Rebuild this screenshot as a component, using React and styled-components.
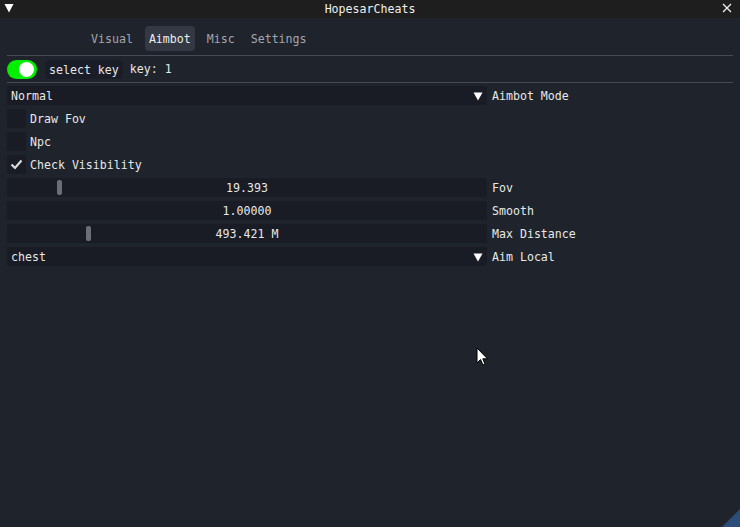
import React from "react";
import styled, { createGlobalStyle } from "styled-components";

const Global = createGlobalStyle`
  html, body { margin: 0; padding: 0; background: #1f232b; }
  * { box-sizing: border-box; }
`;

const Window = styled.div`
  position: relative;
  width: 740px;
  height: 527px;
  background: #1f232b;
  font-family: "DejaVu Sans Mono", "Liberation Mono", monospace;
  font-size: 11.6px;
  color: #e8e8e8;
  overflow: hidden;
  display: flex;
  flex-direction: column;
`;

const TitleBar = styled.div`
  height: 18px;
  background: #1e1e1e;
  display: grid;
  grid-template-columns: 20px 1fr 20px;
  align-items: center;
  color: #f0f0f0;
`;

const Title = styled.div`
  text-align: center;
  line-height: 18px;
`;

const Content = styled.div`
  padding: 8px 7px 0 7px;
  display: flex;
  flex-direction: column;
`;

const Tabs = styled.div`
  display: flex;
  gap: 8px;
  padding-left: 80px;
  height: 25px;
`;

const Tab = styled.div`
  padding: 0 4px;
  height: 25px;
  line-height: 26px;
  border-radius: 4px;
  color: ${(p) => (p.$active ? "#eeeeee" : "#a4a6ad")};
  background: ${(p) => (p.$active ? "#343843" : "transparent")};
`;

const Separator = styled.div`
  height: 1px;
  background: #464a55;
  margin: ${(p) => p.$m || "4px 0 3px 0"};
`;

const Row = styled.div`
  display: flex;
  align-items: center;
  height: 19px;
  margin-bottom: 4px;
  line-height: 20px;
`;

const ToggleRow = styled.div`
  display: flex;
  align-items: center;
  height: 20px;
  gap: 8px;
`;

const Toggle = styled.div`
  width: 30px;
  height: 19px;
  border-radius: 10px;
  background: #00f000;
  display: flex;
  align-items: center;
  justify-content: flex-end;
  padding-right: 3px;
`;

const Knob = styled.div`
  width: 15px;
  height: 15px;
  border-radius: 50%;
  background: #ffffff;
`;

const KeyButton = styled.div`
  height: 19px;
  line-height: 20px;
  padding: 0 4px;
  border-radius: 4px;
  background: #1a1c27;
`;

const Plain = styled.span`
  margin-left: -1px;
  line-height: 20px;
`;

const Frame = styled.div`
  position: relative;
  width: 480px;
  height: 19px;
  border-radius: 3px;
  background: #191b25;
  display: flex;
  align-items: center;
  padding: 0 4px;
  justify-content: ${(p) => (p.$center ? "center" : "space-between")};
`;

const Label = styled.span`
  margin-left: 5px;
`;

const Arrow = styled.svg`
  width: 10px;
  height: 10px;
`;

const Grab = styled.div`
  position: absolute;
  top: 2px;
  left: ${(p) => p.$x}px;
  width: 5px;
  height: 15px;
  border-radius: 2px;
  background: #6b6e77;
`;

const Box = styled.div`
  width: 19px;
  height: 19px;
  border-radius: 3px;
  background: #191b25;
  display: flex;
  align-items: center;
  justify-content: center;
`;

const CheckLabel = styled.span`
  margin-left: 4px;
`;

const Cursor = styled.svg`
  position: absolute;
  left: 476px;
  top: 347px;
  width: 13px;
  height: 20px;
`;

const Grip = styled.svg`
  position: absolute;
  right: 0;
  bottom: 0;
  width: 22px;
  height: 22px;
`;

const DownArrow = () => (
  <Arrow viewBox="0 0 10 10">
    <path d="M0.5 1.5 H9.5 L5 9.5 Z" fill="#ffffff" />
  </Arrow>
);

const Combo = ({ value, label }) => (
  <Row>
    <Frame>
      <span>{value}</span>
      <DownArrow />
    </Frame>
    <Label>{label}</Label>
  </Row>
);

const Slider = ({ value, label, grab }) => (
  <Row>
    <Frame $center>
      {grab !== undefined && <Grab $x={grab} />}
      <span>{value}</span>
    </Frame>
    <Label>{label}</Label>
  </Row>
);

const Check = ({ label, checked }) => (
  <Row>
    <Box>
      {checked && (
        <svg width="13" height="11" viewBox="0 0 13 11">
          <path d="M1.5 5.5 L5 9 L11.5 1.5" stroke="#dcdcdc" strokeWidth="2.2" fill="none" />
        </svg>
      )}
    </Box>
    <CheckLabel>{label}</CheckLabel>
  </Row>
);

export default function App() {
  return (
    <>
      <Global />
      <Window>
        <TitleBar>
          <svg width="20" height="18" viewBox="0 0 20 18">
            <path d="M4.5 4 H13.5 L9 12.5 Z" fill="#ffffff" />
          </svg>
          <Title>HopesarCheats</Title>
          <svg width="20" height="18" viewBox="0 0 20 18">
            <path d="M3 4 L11 12 M11 4 L3 12" stroke="#f0f0f0" strokeWidth="1.3" />
          </svg>
        </TitleBar>
        <Content>
          <Tabs>
            <Tab>Visual</Tab>
            <Tab $active>Aimbot</Tab>
            <Tab>Misc</Tab>
            <Tab>Settings</Tab>
          </Tabs>
          <Separator $m="4px 0 3px 0" />
          <ToggleRow>
            <Toggle>
              <Knob />
            </Toggle>
            <KeyButton>select key</KeyButton>
            <Plain>key: 1</Plain>
          </ToggleRow>
          <Separator $m="3px 0 3px 0" />
          <Combo value="Normal" label="Aimbot Mode" />
          <Check label="Draw Fov" />
          <Check label="Npc" />
          <Check label="Check Visibility" checked />
          <Slider value="19.393" label="Fov" grab={50} />
          <Slider value="1.00000" label="Smooth" />
          <Slider value="493.421 M" label="Max Distance" grab={79} />
          <Combo value="chest" label="Aim Local" />
        </Content>
        <Cursor viewBox="0 0 13 20">
          <path d="M1 1 V16 L4.5 12.5 L7 18 L9 17 L6.8 11.8 H11.5 Z" fill="#ffffff" stroke="#000000" strokeWidth="1" />
        </Cursor>
        <Grip viewBox="0 0 22 22">
          <path d="M22 4 V22 H4 Z" fill="#2c4d78" />
        </Grip>
      </Window>
    </>
  );
}
